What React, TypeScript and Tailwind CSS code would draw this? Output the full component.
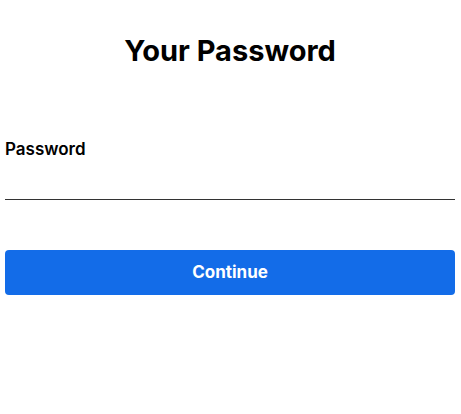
export default function App() {
    return (
        <div className="min-h-screen bg-white pl-[5px] pr-[6px] text-black" style={{ fontFamily: 'Inter, "Noto Sans", sans-serif' }}>
            {/* Title */}
            <h1 className="pt-[33px] text-center text-[29px] font-bold leading-[36px]">Your Password</h1>

            {/* Password field */}
            <div className="mt-[70px]">
                <label className="block text-[17px] font-semibold leading-[20px]">Password</label>
                <input
                    type="password"
                    className="block h-[41px] w-full border-b border-[#333] outline-none"
                />
            </div>

            {/* Continue */}
            <button className="mt-[50px] h-[45px] w-full rounded-[4px] bg-[#136ce8] text-[17px] font-bold text-white">
                Continue
            </button>
        </div>
    );
}
